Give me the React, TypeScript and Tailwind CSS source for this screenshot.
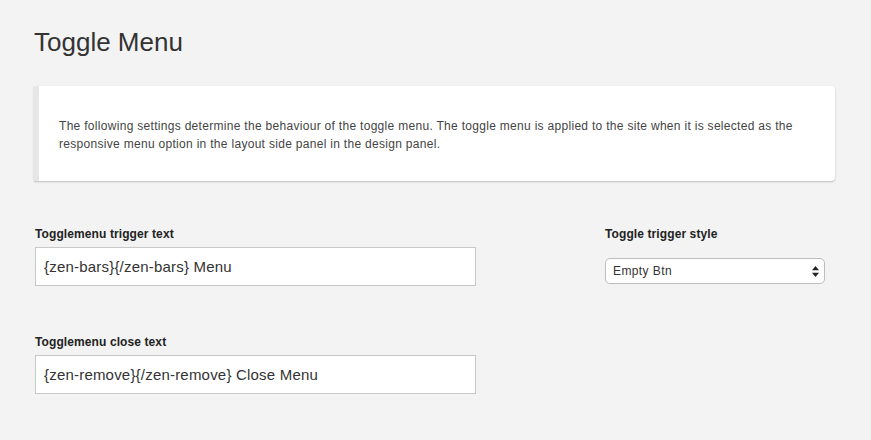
const font = { fontFamily: '"Liberation Sans", Arial, sans-serif' };

function TextField({ label, value }: { label: string; value: string }) {
  return (
    <div className="flex flex-col">
      <label className="text-[12px] font-bold text-[#222] leading-[14px] mb-[6px] tracking-[0.1px]">{label}</label>
      <input
        readOnly
        value={value}
        className="h-[39px] w-[441px] border border-[#c8c8c8] bg-white px-[8px] text-[15px] tracking-[0.2px] text-[#333] outline-none"
        style={font}
      />
    </div>
  );
}

export default function App() {
  return (
    <div className="min-h-[440px] w-full bg-[#f3f3f3] px-[35px] pt-[27px] text-[#333]" style={font}>
      <h1 className="text-[26px] leading-[30px] font-normal text-[#333] -ml-[1px]">Toggle Menu</h1>

      {/* Info card */}
      <div className="mt-[29px] -ml-[1px] w-[801px] rounded-r-[4px] border-l-[5px] border-[#e6e6e6] bg-white pl-[20px] pr-[20px] pt-[31px] pb-[28px] shadow-[0_1px_2px_rgba(0,0,0,0.22)]">
        <p className="text-[12px] leading-[18px] tracking-[0.3px] text-[#444]">
          The following settings determine the behaviour of the toggle menu. The toggle menu is applied to the site when it is selected as the responsive menu option in the layout side panel in the design panel.
        </p>
      </div>

      <div className="mt-[46px] flex items-start">
        <div className="flex flex-col gap-[49px]">
          <TextField label="Togglemenu trigger text" value="{zen-bars}{/zen-bars} Menu" />
          <TextField label="Togglemenu close text" value="{zen-remove}{/zen-remove} Close Menu" />
        </div>

        <div className="ml-[129px] flex flex-col">
          <label className="text-[12px] font-bold text-[#222] leading-[14px] mb-[17px] tracking-[0.1px]">Toggle trigger style</label>
          <div className="relative h-[26px] w-[220px] rounded-[5px] border border-[#bdbdbd] bg-white">
            <span className="absolute left-[7px] top-[5px] text-[12px] leading-[14px] tracking-[0.4px] text-[#333]">Empty Btn</span>
            <svg className="absolute right-[5px] top-[7px]" width="7" height="11" viewBox="0 0 7 11">
              <path d="M3.5 0 L7 4.2 L0 4.2 Z" fill="#222" />
              <path d="M3.5 11 L7 6.8 L0 6.8 Z" fill="#222" />
            </svg>
          </div>
        </div>
      </div>
    </div>
  );
}
